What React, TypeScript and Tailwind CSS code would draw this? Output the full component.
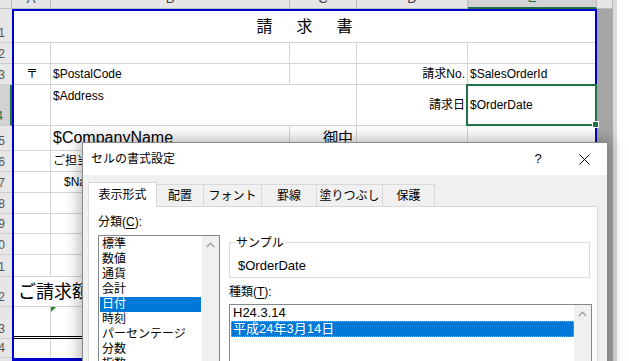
import React from 'react'

const rowHeaderHeights = [
  'h-[34px]', 'h-[21px]', 'h-[21px]', 'h-[41px]', 'h-[25px]', 'h-[21px]', 'h-[21px]',
  'h-[21px]', 'h-[20px]', 'h-[21px]', 'h-[22px]', 'h-[30px]', 'h-[32px]', 'h-[19px]',
]

const categories = ['標準', '数値', '通貨', '会計', '日付', '時刻', 'パーセンテージ', '分数', '指数']

function Cell({ className = '', children }: { className?: string; children?: React.ReactNode }) {
  return (
    <div className={`flex h-full shrink-0 items-center whitespace-nowrap border-r border-[#d4d4d4] px-[2px] ${className}`}>
      {children}
    </div>
  )
}

function Row({ className = '', children }: { className?: string; children: React.ReactNode }) {
  return <div className={`flex shrink-0 border-b border-[#d4d4d4] ${className}`}>{children}</div>
}

function EmptyRow({ h }: { h: string }) {
  return (
    <Row className={h}>
      <Cell className="w-[37px]" />
      <Cell className="w-[239px]" />
      <Cell className="w-[67px]" />
      <Cell className="w-[111px]" />
      <Cell className="w-[127px] border-r-0" />
    </Row>
  )
}

function ChevronUp() {
  return (
    <svg width="9" height="6" viewBox="0 0 9 6">
      <polyline points="0.8,5 4.5,1.3 8.2,5" fill="none" stroke="#a6a6a6" strokeWidth="1.6" />
    </svg>
  )
}

function ColumnHeaders() {
  const base = 'flex h-full shrink-0 items-center justify-center border-b border-r border-[#bcbcbc]'
  return (
    <div className="flex h-[20px] bg-[#e6e6e6] text-[13px] text-[#444]">
      <div className={`${base} w-[34px]`} />
      <div className={`${base} w-[39px]`}>A</div>
      <div className={`${base} w-[239px]`}>B</div>
      <div className={`${base} w-[67px]`}>C</div>
      <div className={`${base} w-[111px]`}>D</div>
      <div className="flex h-full w-[129px] shrink-0 items-center justify-center border-b-2 border-r border-b-[#217346] border-r-[#bcbcbc] bg-[#d2d2d2] text-[#217346]">
        E
      </div>
      <div className={`${base} w-[16px]`} />
      <div className="w-[4px] shrink-0 bg-[#dadada]" />
      <div className="flex-1 bg-white" />
    </div>
  )
}

function RowHeaders() {
  return (
    <div className="flex w-[34px] shrink-0 flex-col bg-[#e6e6e6] text-[12px] leading-[14px] text-[#555]">
      {rowHeaderHeights.map((h, i) => (
        <div
          key={i}
          className={`flex shrink-0 items-end justify-end border-b border-[#cdcdcd] pb-[2px] pr-[7px] ${h} ${
            i === 3 ? 'border-r-2 border-r-[#217346] bg-[#d2d2d2] text-[#217346]' : ''
          }`}
        >
          {i + 1}
        </div>
      ))}
      <div className="flex-1" />
    </div>
  )
}

function Invoice() {
  return (
    <div className="flex w-[585px] shrink-0 flex-col border-x-2 border-b-[3px] border-t-2 border-[#0000cc] bg-white text-[12px] leading-[14px] text-black">
      <Row className="h-[32px]">
        <div className="flex w-full items-center justify-center pl-[4px] text-[16px] leading-[20px] tracking-[4px]">
          請　求　書
        </div>
      </Row>
      <EmptyRow h="h-[21px]" />
      <Row className="h-[21px]">
        <Cell className="w-[37px] justify-center">〒</Cell>
        <Cell className="w-[239px]">$PostalCode</Cell>
        <Cell className="w-[67px]" />
        <Cell className="w-[111px] justify-end">請求No.</Cell>
        <Cell className="w-[127px] border-r-0">$SalesOrderId</Cell>
      </Row>
      <Row className="h-[41px]">
        <Cell className="w-[37px]" />
        <Cell className="w-[306px] items-start pt-[4px]">$Address</Cell>
        <Cell className="w-[111px] justify-end">請求日</Cell>
        <div className="relative flex h-full w-[127px] shrink-0 items-center px-[2px]">
          $OrderDate
          <div className="absolute -bottom-[1px] -left-[2px] -right-[2px] -top-[1px] border-2 border-[#217346]" />
          <div className="absolute -bottom-[3px] -right-[4px] h-[7px] w-[7px] border border-white bg-[#217346]" />
        </div>
      </Row>
      <Row className="h-[25px]">
        <Cell className="w-[37px]" />
        <Cell className="w-[239px] text-[16px] leading-[20px]">$CompanyName</Cell>
        <Cell className="w-[67px] justify-end pr-[3px] text-[15px] leading-[20px]">御中</Cell>
        <Cell className="w-[111px]" />
        <Cell className="w-[127px] border-r-0" />
      </Row>
      <Row className="h-[21px]">
        <Cell className="w-[37px]" />
        <Cell className="w-[239px]">ご担当者様</Cell>
        <Cell className="w-[67px]" />
        <Cell className="w-[111px]" />
        <Cell className="w-[127px] border-r-0" />
      </Row>
      <Row className="h-[21px]">
        <Cell className="w-[37px]" />
        <Cell className="w-[239px] pl-[13px]">$Name 様</Cell>
        <Cell className="w-[67px]" />
        <Cell className="w-[111px]" />
        <Cell className="w-[127px] border-r-0" />
      </Row>
      <EmptyRow h="h-[21px]" />
      <EmptyRow h="h-[20px]" />
      <EmptyRow h="h-[21px]" />
      <EmptyRow h="h-[22px]" />
      <Row className="h-[30px]">
        <Cell className="w-[276px] pl-[4px] text-[18px] leading-[22px]">ご請求額</Cell>
        <Cell className="w-[67px]" />
        <Cell className="w-[111px]" />
        <Cell className="w-[127px] border-r-0" />
      </Row>
      <Row className="h-[32px] border-b-[3px] border-double border-b-black">
        <Cell className="w-[37px]" />
        <Cell className="relative w-[239px]">
          <span className="absolute left-0 top-0 h-0 w-0 border-r-[5px] border-t-[5px] border-r-transparent border-t-[#1d8a1d]" />
        </Cell>
        <Cell className="w-[67px]" />
        <Cell className="w-[111px]" />
        <Cell className="w-[127px] border-r-0" />
      </Row>
      <Row className="h-[19px] border-b-0">
        <Cell className="w-[37px]" />
        <Cell className="w-[239px]" />
        <Cell className="w-[67px]" />
        <Cell className="w-[111px]" />
        <Cell className="w-[127px] border-r-0" />
      </Row>
    </div>
  )
}

function FormatDialog() {
  const tab = 'flex h-[22px] shrink-0 items-center justify-center border-r border-t border-[#d9d9d9]'
  return (
    <div className="absolute left-[82px] top-[142px] flex h-[260px] w-[526px] flex-col border border-[#8a8a8a] bg-[#f0f0f0] text-[12px] leading-[14px] text-black shadow-[0_0_14px_3px_rgba(0,0,0,0.28)]">
      <div className="flex h-[32px] shrink-0 items-center bg-white">
        <span className="pl-[8px]">セルの書式設定</span>
        <span className="ml-auto flex h-full w-[46px] items-center justify-center text-[13px]">?</span>
        <span className="flex h-full w-[46px] items-center justify-center">
          <svg width="11" height="11" viewBox="0 0 11 11">
            <path d="M0.5 0.5L10.5 10.5M10.5 0.5L0.5 10.5" stroke="#000" strokeWidth="1" />
          </svg>
        </span>
      </div>

      <div className="px-[5px] pt-[7px]">
        <div className="flex h-[24px] items-end">
          <div className="relative z-10 -mb-[1px] flex h-[25px] w-[69px] shrink-0 items-center justify-center border-x border-t border-[#d9d9d9] bg-white">
            表示形式
          </div>
          <div className={`${tab} w-[47px]`}>配置</div>
          <div className={`${tab} w-[58px]`}>フォント</div>
          <div className={`${tab} w-[55px]`}>罫線</div>
          <div className={`${tab} w-[66px]`}>塗りつぶし</div>
          <div className={`${tab} w-[52px]`}>保護</div>
        </div>

        <div className="flex h-[200px] w-[510px] border border-[#d9d9d9] bg-white">
          <div className="ml-[9px] w-[122px] shrink-0 pt-[8px]">
            <div>
              分類(<span className="underline underline-offset-2">C</span>):
            </div>
            <div className="mt-[6px] flex h-[130px] border border-[#828790]">
              <div className="flex-1 px-[1px] pt-[1px]">
                {categories.map((c) => (
                  <div
                    key={c}
                    className={`h-[15px] whitespace-nowrap pl-[2px] leading-[15px] ${
                      c === '日付' ? 'bg-[#0078d7] text-white' : ''
                    }`}
                  >
                    {c}
                  </div>
                ))}
              </div>
              <div className="w-[17px] shrink-0 bg-[#f0f0f0]">
                <div className="flex h-[17px] items-center justify-center">
                  <ChevronUp />
                </div>
              </div>
            </div>
          </div>

          <div className="ml-[9px] w-[363px] shrink-0">
            <div className="relative mt-[35px] flex h-[36px] w-[361px] items-end border border-[#dcdcdc] pb-[3px] pl-[8px] text-[13px] leading-[16px]">
              <span className="absolute -top-[7px] left-[5px] bg-white px-[1px] text-[12px] leading-[14px]">サンプル</span>
              $OrderDate
            </div>
            <div className="mt-[7px]">
              種類(<span className="underline underline-offset-2">T</span>):
            </div>
            <div className="mt-[5px] flex h-[80px] border border-[#828790] text-[13px]">
              <div className="flex-1 pl-[1px]">
                <div className="h-[16px] border border-transparent pl-[1px] leading-[14px]">H24.3.14</div>
                <div className="h-[16px] border border-dotted border-[#e89a4a] bg-[#0078d7] pl-[1px] leading-[14px] text-white">
                  平成24年3月14日
                </div>
              </div>
              <div className="w-[17px] shrink-0 bg-[#f0f0f0]">
                <div className="flex h-[17px] items-center justify-center">
                  <ChevronUp />
                </div>
              </div>
            </div>
          </div>
        </div>
      </div>
    </div>
  )
}

export default function App() {
  return (
    <div className="relative h-[361px] w-[629px] overflow-hidden bg-white font-['Liberation_Sans','Noto_Sans_CJK_JP',sans-serif]">
      <div className="-ml-[22px] -mt-[11px] flex w-[651px] flex-col">
        <ColumnHeaders />
        <div className="flex h-[352px]">
          <RowHeaders />
          <Invoice />
          <div className="w-[16px] shrink-0 bg-[#a6a6a6]" />
          <div className="w-[4px] shrink-0 bg-[#dadada]" />
          <div className="flex-1 bg-white" />
        </div>
      </div>
      <FormatDialog />
    </div>
  )
}
